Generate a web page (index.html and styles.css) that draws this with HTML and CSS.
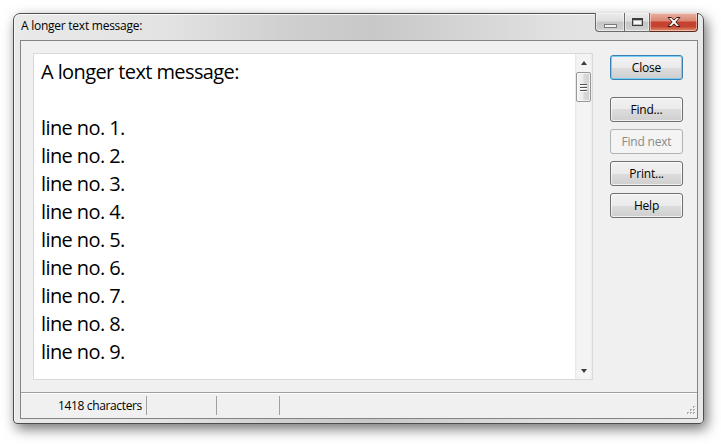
FILE: index.html
```html
<!DOCTYPE html>
<html>
<head>
<meta charset="utf-8">
<link rel="stylesheet" href="styles.css">
</head>
<body>
<div class="window">
  <div class="titlebar">
    <span class="title">A longer text message:</span>
    <div class="caption">
      <div class="cbtn min"><span class="min-glyph"></span></div>
      <div class="cbtn max"><span class="max-glyph"></span></div>
      <div class="cbtn close">
        <svg width="14" height="11" viewBox="0 0 14 11"><path d="M1 0.5h3.2l2.8 2.6 2.8-2.6h3.2l-4.2 4.5 4.2 4.5h-3.2l-2.8-2.6-2.8 2.6h-3.2l4.2-4.5z" fill="#fff" stroke="#3d1410" stroke-width="1" stroke-linejoin="round"/></svg>
      </div>
    </div>
  </div>
  <div class="client">
    <div class="main">
      <div class="textbox">
        <div class="text">
          <div class="line">A longer text message:</div>
          <div class="line">&nbsp;</div>
          <div class="line">line no. 1.</div>
          <div class="line">line no. 2.</div>
          <div class="line">line no. 3.</div>
          <div class="line">line no. 4.</div>
          <div class="line">line no. 5.</div>
          <div class="line">line no. 6.</div>
          <div class="line">line no. 7.</div>
          <div class="line">line no. 8.</div>
          <div class="line">line no. 9.</div>
        </div>
        <div class="scrollbar">
          <div class="sb-arrow"><span class="tri-up"></span></div>
          <div class="thumb"><i></i><i></i><i></i></div>
          <div class="track"></div>
          <div class="sb-arrow"><span class="tri-down"></span></div>
        </div>
      </div>
      <div class="buttons">
        <button class="btn default">Close</button>
        <button class="btn">Find...</button>
        <button class="btn" disabled>Find next</button>
        <button class="btn">Print...</button>
        <button class="btn">Help</button>
      </div>
    </div>
    <div class="statusbar">
      <div class="panel p1">1418 characters</div>
      <div class="panel p2"></div>
      <div class="panel p3"></div>
      <div class="grip">
        <svg width="11" height="11" viewBox="0 0 11 11">
          <g fill="#a9a9a9">
            <rect x="8" y="0" width="2" height="2"/>
            <rect x="5" y="3" width="2" height="2"/><rect x="8" y="3" width="2" height="2"/>
            <rect x="2" y="6" width="2" height="2"/><rect x="5" y="6" width="2" height="2"/><rect x="8" y="6" width="2" height="2"/>
          </g>
          <g fill="#fff">
            <rect x="9" y="1" width="1" height="1"/>
            <rect x="6" y="4" width="1" height="1"/><rect x="9" y="4" width="1" height="1"/>
            <rect x="3" y="7" width="1" height="1"/><rect x="6" y="7" width="1" height="1"/><rect x="9" y="7" width="1" height="1"/>
          </g>
        </svg>
      </div>
    </div>
  </div>
</div>
</body>
</html>
```

FILE: styles.css
```css
html, body {
  margin: 0;
  background: #ffffff;
}
body {
  width: 721px;
  height: 444px;
  overflow: hidden;
  box-sizing: border-box;
  padding: 13px 0 0 13px;
  font-family: "Open Sans", "Noto Sans", sans-serif;
  color: #000;
}
.window {
  width: 691px;
  height: 411px;
  box-sizing: border-box;
  border: 1px solid #4e4e4e;
  border-radius: 7px 7px 4px 4px;
  padding: 0 5px 4px 6px;
  display: flex;
  flex-direction: column;
  background: linear-gradient(90deg, #e9e9e9 0%, #e3e3e3 22%, #cfcfcf 40%, #c8c8c8 52%, #d3d3d3 64%, #e2e2e2 80%, #e8e8e8 100%);
  box-shadow: 3px 5px 13px rgba(0, 0, 0, 0.55), inset 0 1px 0 rgba(255, 255, 255, 0.85), inset 1px 0 0 rgba(255, 255, 255, 0.6);
}
.titlebar {
  height: 26px;
  display: flex;
  align-items: flex-start;
}
.title {
  font-size: 12px;
  line-height: 16px;
  padding: 4px 0 0 1px;
  letter-spacing: -0.25px;
}
.caption {
  margin-left: auto;
  margin-top: -1px;
  display: flex;
  height: 19px;
}
.cbtn {
  box-sizing: border-box;
  height: 19px;
  border: 1px solid #6a6a6a;
  border-top: none;
  display: flex;
  align-items: center;
  justify-content: center;
  box-shadow: inset 0 0 0 1px rgba(255, 255, 255, 0.45);
}
.min, .max {
  background: linear-gradient(#ececec 0%, #dedede 45%, #c6c6c6 52%, #cdcdcd 85%, #dadada 100%);
}
.min {
  width: 29px;
  border-right: none;
  border-radius: 0 0 0 4px;
}
.max {
  width: 26px;
}
.close {
  width: 48px;
  border-left: none;
  border-color: #5a2a22;
  border-radius: 0 0 4px 0;
  background: linear-gradient(#eab0a2 0%, #dc8a76 42%, #c4412f 52%, #c4442f 75%, #e2906f 100%);
}
.min-glyph {
  width: 11px;
  height: 2px;
  border: 1px solid #7a7a7a;
  background: #f4f4f4;
  margin-top: 7px;
}
.max-glyph {
  width: 9px;
  height: 5px;
  border: 1px solid #3c3c3c;
  border-top-width: 2px;
  background: #f6f6f6;
  box-shadow: inset 0 0 0 1px #bdbdbd;
}
.client {
  flex: 1;
  border: 1px solid #848484;
  background: #f0f0f0;
  display: flex;
  flex-direction: column;
}
.main {
  flex: 1;
  display: flex;
  padding: 12px 14px 0 12px;
  min-height: 0;
}
.textbox {
  width: 560px;
  height: 327px;
  box-sizing: border-box;
  border: 1px solid #d9d9d9;
  background: #fff;
  display: flex;
}
.text {
  flex: 1;
  overflow: hidden;
  padding: 4px 0 0 7px;
  font-size: 20px;
  line-height: 28px;
  letter-spacing: -0.6px;
  white-space: nowrap;
}
.scrollbar {
  width: 17px;
  display: flex;
  flex-direction: column;
  background: linear-gradient(90deg, #e6e6e6 0%, #f3f3f3 12%, #f5f5f5 85%, #ececec 100%);
}
.sb-arrow {
  height: 17px;
  display: flex;
  align-items: center;
  justify-content: center;
}
.tri-up {
  width: 0;
  height: 0;
  border-left: 3.5px solid transparent;
  border-right: 3.5px solid transparent;
  border-bottom: 4px solid #3a3a3a;
}
.tri-down {
  width: 0;
  height: 0;
  border-left: 3.5px solid transparent;
  border-right: 3.5px solid transparent;
  border-top: 4px solid #3a3a3a;
}
.thumb {
  margin: 1px 1px 0 1px;
  height: 30px;
  box-sizing: border-box;
  border: 1px solid #979797;
  border-radius: 2px;
  background: linear-gradient(90deg, #f3f3f3 0%, #ebebeb 45%, #d9d9d9 55%, #d0d0d0 100%);
  box-shadow: inset 0 0 0 1px rgba(255, 255, 255, 0.7);
  display: flex;
  flex-direction: column;
  align-items: center;
  justify-content: center;
  gap: 2px;
}
.thumb i {
  display: block;
  width: 7px;
  height: 1px;
  background: #555;
  box-shadow: 0 1px 0 #fff;
}
.track {
  flex: 1;
}
.buttons {
  margin-left: 17px;
  width: 73px;
  display: flex;
  flex-direction: column;
  gap: 7px;
  padding-top: 2px;
}
.btn {
  height: 25px;
  box-sizing: border-box;
  border: 1px solid #707070;
  border-radius: 3px;
  padding: 0;
  font-family: "Open Sans", "Noto Sans", sans-serif;
  font-size: 12px;
  letter-spacing: -0.2px;
  color: #000;
  background: linear-gradient(#f2f2f2 0%, #ebebeb 50%, #dddddd 50%, #cfcfcf 100%);
  box-shadow: inset 0 0 0 1px rgba(255, 255, 255, 0.7);
}
.btn.default {
  margin-bottom: 10px;
  border-color: #3c7fb1;
  box-shadow: inset 0 0 0 1px #74d1f5;
}
.btn:disabled {
  border-color: #adb2b5;
  background: #f4f4f4;
  color: #8a8a8a;
  box-shadow: none;
}
.statusbar {
  height: 25px;
  border-top: 1px solid #a0a0a0;
  box-shadow: inset 0 1px 0 #ffffff;
  display: flex;
  font-size: 12px;
  letter-spacing: -0.35px;
}
.panel {
  margin: 3px 0 3px 0;
  box-sizing: border-box;
  border-right: 1px solid #a0a0a0;
  display: flex;
  align-items: center;
  justify-content: flex-end;
  padding-right: 4px;
}
.p1 { width: 126px; }
.p2 { width: 70px; }
.p3 { width: 63px; }
.grip {
  margin-left: auto;
  align-self: flex-end;
  margin-right: 1px;
  margin-bottom: 1px;
  height: 11px;
}
.grip svg { display: block; }
```
